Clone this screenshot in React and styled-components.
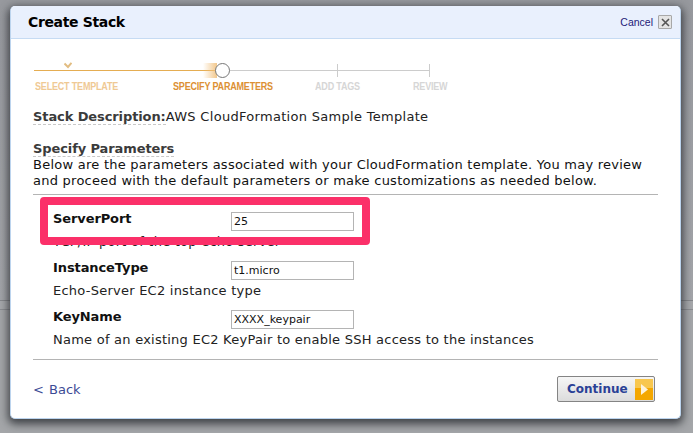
import styled, { createGlobalStyle } from 'styled-components';

const GlobalStyle = createGlobalStyle`
  html, body {
    margin: 0;
    padding: 0;
    width: 693px;
    height: 433px;
    overflow: hidden;
  }
`;

const Backdrop = styled.div`
  position: relative;
  width: 693px;
  height: 433px;
  box-sizing: border-box;
  padding: 6px 12px 14px 10px;
  background: linear-gradient(
    #97999e 0,
    #a3a5a9 300px,
    #85878b 300px,
    #85878b 301px,
    #a6a8ab 301px,
    #a6a8ab 309px,
    #8b8d91 309px,
    #8b8d91 310px,
    #a4a6a9 310px
  );
  font-family: 'DejaVu Sans', Verdana, sans-serif;
  overflow: hidden;
`;

const Modal = styled.div`
  width: 671px;
  height: 413px;
  display: flex;
  flex-direction: column;
  background: #fff;
  border: 1px solid #bcd4ee;
  border-top: 0;
  box-sizing: border-box;
  border-radius: 5px;
  box-shadow: 0 3px 9px 2px rgba(30, 32, 38, 0.75);
  overflow: hidden;
`;

const Header = styled.div`
  height: 32px;
  flex: none;
  display: flex;
  align-items: center;
  justify-content: space-between;
  padding: 0 8px 0 17px;
  background: #e9f0fd;
  border-bottom: 1px solid #c6dbf3;
`;

const Title = styled.h1`
  margin: 0;
  font-size: 14px;
  font-weight: 700;
  letter-spacing: -0.35px;
  color: #000;
`;

const CancelWrap = styled.div`
  display: flex;
  align-items: center;
  gap: 5px;
`;

const CancelLink = styled.span`
  font-family: 'Liberation Sans', Arial, sans-serif;
  font-size: 10.5px;
  color: #1d1a78;
`;

const CloseButton = styled.div`
  width: 12px;
  height: 12px;
  display: flex;
  align-items: center;
  justify-content: center;
  border: 1px solid #a8a8a8;
  border-radius: 1px;
  background: #e4e4e4;
`;

const Steps = styled.div`
  display: grid;
  grid-template-columns: 188px 116px 92px;
  width: 396px;
  margin: 25px 0 0 23px;
  height: 38px;
  flex: none;
`;

const Step = styled.div`
  position: relative;
  height: 38px;
`;

const StepLine = styled.div`
  position: absolute;
  left: 0;
  right: 0;
  top: 6px;
  height: 1px;
  background: ${({ $done }) => ($done ? '#e5ad52' : '#cccccc')};
`;

const StepLabel = styled.div`
  position: absolute;
  top: 17px;
  left: ${({ $left }) => $left}px;
  white-space: nowrap;
  font-family: 'Liberation Sans', Arial, sans-serif;
  font-size: 10px;
  font-weight: 700;
  letter-spacing: -0.2px;
  transform: scaleX(0.9);
  transform-origin: left;
  color: ${({ $color }) => $color};
`;

const StepTick = styled.div`
  position: absolute;
  right: 0;
  top: 0;
  width: 1px;
  height: 13px;
  background: #cccccc;
`;

const CheckMark = styled.svg`
  position: absolute;
  left: 30px;
  top: -2px;
`;

const Glow = styled.div`
  position: absolute;
  right: 5px;
  top: -1px;
  width: 14px;
  height: 15px;
  background: linear-gradient(90deg, rgba(240, 190, 120, 0), rgba(240, 190, 120, 0.85));
`;

const Knob = styled.div`
  position: absolute;
  z-index: 1;
  right: -8px;
  top: -1px;
  width: 15px;
  height: 15px;
  box-sizing: border-box;
  border: 1px solid #777;
  border-radius: 50%;
  background: #fff;
`;

const Body = styled.div`
  flex: 1;
  padding: 0 22px;
  display: flex;
  flex-direction: column;
`;

const Description = styled.div`
  margin-top: 7px;
  font-size: 13px;
  line-height: 15px;
  letter-spacing: 0.3px;
  color: #222;
  white-space: nowrap;
`;

const SectionLabel = styled.span`
  font-weight: 700;
  letter-spacing: -0.1px;
  color: #3b3b3b;
  border-bottom: 1px dashed #c8c8c8;
`;

const SectionBlock = styled.div`
  margin-top: 17px;
  font-size: 13px;
  line-height: 16px;
  white-space: nowrap;
`;

const Paragraph = styled.div`
  color: #111;
  letter-spacing: 0.25px;
`;

const Rule = styled.div`
  height: 1px;
  background: #b4b4b4;
  margin-top: ${({ $top }) => $top}px;
  flex: none;
`;

const Fields = styled.div`
  padding: 14px 0 0 20px;
  display: flex;
  flex-direction: column;
`;

const Field = styled.div`
  height: 49px;
`;

const FieldRow = styled.div`
  display: grid;
  grid-template-columns: 178px 123px;
  align-items: center;
  height: 20px;
`;

const FieldName = styled.div`
  font-size: 13px;
  font-weight: 700;
  letter-spacing: -0.1px;
  margin-top: -4px;
  color: #111;
`;

const FieldInput = styled.div`
  height: 19px;
  box-sizing: border-box;
  border: 1px solid #b4b4b4;
  padding-left: 2px;
  font-size: 11px;
  line-height: 18px;
  color: #111;
  margin-top: 3px;
`;

const FieldHelp = styled.div`
  font-size: 13px;
  line-height: 16px;
  margin-top: 5px;
  letter-spacing: 0.24px;
  color: #222;
  white-space: nowrap;
`;

const Highlight = styled.div`
  position: absolute;
  left: 40px;
  top: 197px;
  width: 330px;
  height: 48px;
  box-sizing: border-box;
  border: 8px solid #fb3069;
  border-radius: 4px;
`;

const Footer = styled.div`
  display: flex;
  align-items: center;
  justify-content: space-between;
  padding: 16px 3px 0 0;
`;

const BackLink = styled.span`
  font-size: 13px;
  color: #3c4b96;
  word-spacing: 1px;
`;

const ContinueButton = styled.div`
  width: 98px;
  height: 26px;
  box-sizing: border-box;
  display: flex;
  align-items: center;
  justify-content: space-between;
  padding: 0 1px 0 9px;
  border: 1px solid #848484;
  border-radius: 2px;
  background: linear-gradient(#f6f6f6, #dcdcdc);
  font-size: 12px;
  font-weight: 700;
  color: #2a4196;
`;

const ArrowBox = styled.svg`
  flex: none;
`;

const fields = [
  { name: 'ServerPort', value: '25', help: 'TCP/IP port of the top echo server' },
  { name: 'InstanceType', value: 't1.micro', help: 'Echo-Server EC2 instance type' },
  {
    name: 'KeyName',
    value: 'XXXX_keypair',
    help: 'Name of an existing EC2 KeyPair to enable SSH access to the instances',
  },
];

export default function App() {
  return (
    <Backdrop>
      <GlobalStyle />
      <Modal>
        <Header>
          <Title>Create Stack</Title>
          <CancelWrap>
            <CancelLink>Cancel</CancelLink>
            <CloseButton>
              <svg width='9' height='9' viewBox='0 0 9 9'>
                <path d='M1 1l7 7M8 1L1 8' stroke='#555' strokeWidth='1.6' />
              </svg>
            </CloseButton>
          </CancelWrap>
        </Header>
        <Steps>
          <Step>
            <StepLine $done />
            <CheckMark width='8' height='7' viewBox='0 0 8 7'>
              <path d='M0.5 1.5L4 5L7.5 0.8' stroke='#e2bd82' strokeWidth='2' fill='none' />
            </CheckMark>
            <StepLabel $left={1} $color='#efc994'>SELECT TEMPLATE</StepLabel>
            <Glow />
            <Knob />
            <StepLabel $left={139} $color='#dc9034'>SPECIFY PARAMETERS</StepLabel>
          </Step>
          <Step>
            <StepLine />
            <StepLabel $left={93} $color='#d6d6d6'>ADD TAGS</StepLabel>
            <StepTick />
          </Step>
          <Step>
            <StepLine />
            <StepLabel $left={75} $color='#d6d6d6'>REVIEW</StepLabel>
            <StepTick />
          </Step>
        </Steps>
        <Body>
          <Description>
            <SectionLabel>Stack Description:</SectionLabel>AWS CloudFormation Sample Template
          </Description>
          <SectionBlock>
            <SectionLabel>Specify Parameters</SectionLabel>
            <Paragraph>Below are the parameters associated with your CloudFormation template. You may review</Paragraph>
            <Paragraph>and proceed with the default parameters or make customizations as needed below.</Paragraph>
          </SectionBlock>
          <Rule $top={5} />
          <Fields>
            {fields.map((field) => (
              <Field key={field.name}>
                <FieldRow>
                  <FieldName>{field.name}</FieldName>
                  <FieldInput>{field.value}</FieldInput>
                </FieldRow>
                <FieldHelp>{field.help}</FieldHelp>
              </Field>
            ))}
          </Fields>
          <Rule $top={3} />
          <Footer>
            <BackLink>&lt; Back</BackLink>
            <ContinueButton>
              Continue
              <ArrowBox width='18' height='21' viewBox='0 0 18 21'>
                <rect width='18' height='21' fill='#f4a700' />
                <rect width='18' height='9' fill='#f8c74f' />
                <path d='M6 5l7 5.5-7 5.5z' fill='#fdf3dc' />
              </ArrowBox>
            </ContinueButton>
          </Footer>
        </Body>
      </Modal>
      <Highlight />
    </Backdrop>
  );
}
